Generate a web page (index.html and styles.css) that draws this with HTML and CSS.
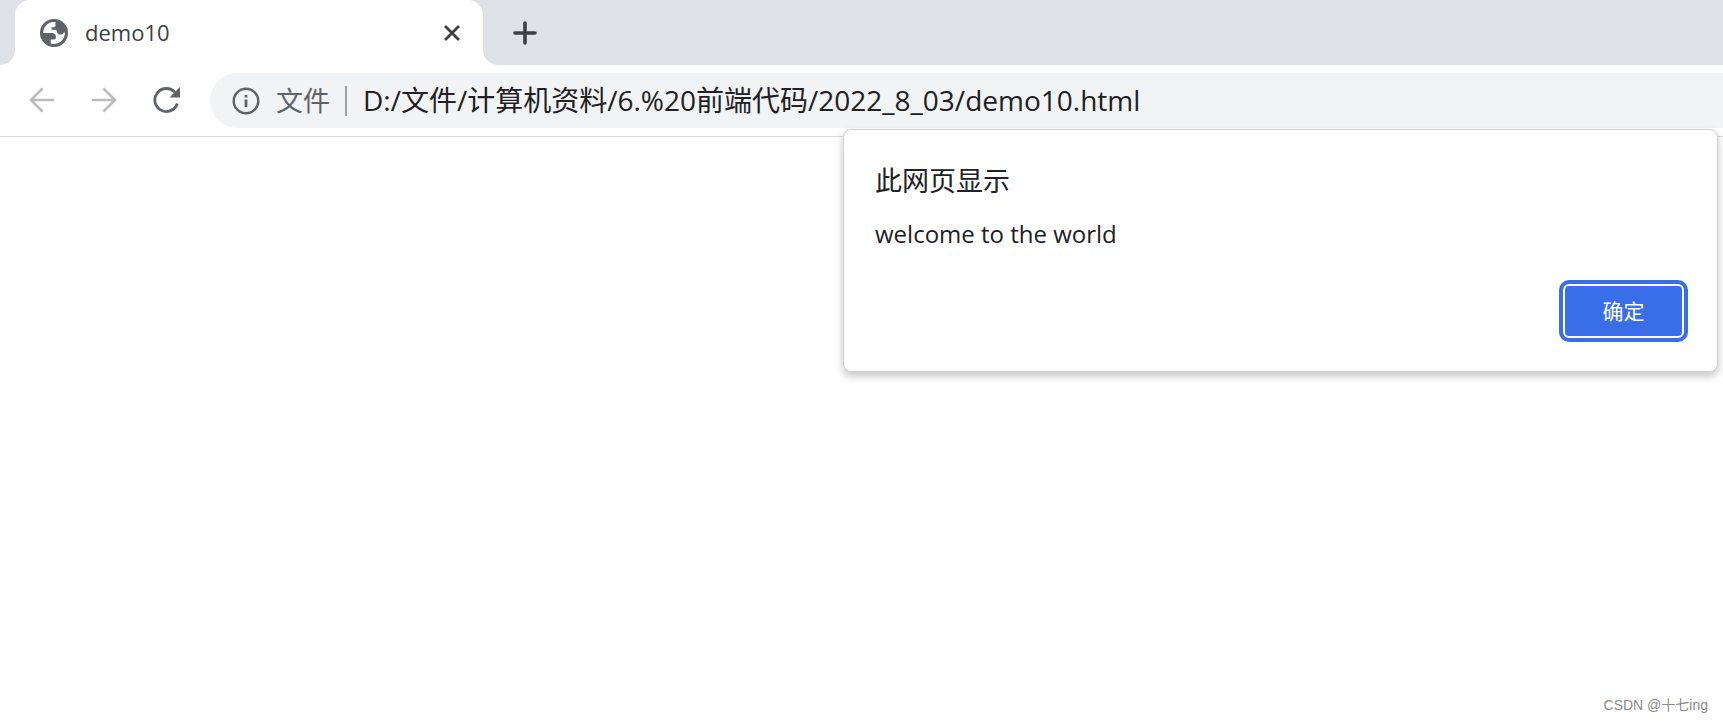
FILE: index.html
```html
<!DOCTYPE html>
<html lang="zh-CN">
<head>
<meta charset="utf-8">
<title>demo10</title>
<link rel="stylesheet" href="styles.css">
</head>
<body>
<header class="browser">
  <div class="tab-strip">
    <div class="strip-start"></div>
    <div class="tab">
      <svg class="globe" viewBox="0 0 28 28" aria-hidden="true">
        <circle cx="14" cy="14" r="14" fill="#5f6368"/>
        <path fill="#fff" d="M16 3.200C14.900 4 15.500 5.200 15.500 6.200C15.500 7.700 14.600 8.200 13.200 8.200H11.500V10.800H15.800C16.800 10.800 16.500 12.300 17 13.200C17.600 14.800 18.700 15.600 20.400 15.600C22.200 15.600 23.300 14.800 23.800 13.400H24.900A10.900 10.900 0 0 1 10.700 24.400V20.500H13.700C15.100 20.500 15.900 19.700 15.900 18.400V17.700C15.900 15.500 14.300 13.900 11.800 13.900H3.200A10.800 10.800 0 0 1 16 3.200Z"/>
      </svg>
      <span class="tab-title">demo10</span>
      <button class="tab-close" aria-label="关闭">
        <svg viewBox="0 0 18 18" width="18" height="18"><path d="M2 2 16 16M16 2 2 16" stroke="#3c4043" stroke-width="2.800"/></svg>
      </button>
    </div>
    <div class="strip-rest">
      <button class="new-tab" aria-label="新标签页">
        <svg viewBox="0 0 24 24" width="24" height="24"><path d="M12 2V22M2 12H22" stroke="#3c4043" stroke-width="3.600" stroke-linecap="round"/></svg>
      </button>
    </div>
  </div>
  <div class="toolbar">
    <button class="nav" aria-label="后退"><svg viewBox="0 0 26 26" width="26" height="26"><path d="M25 13H2M13.500 1.500 2 13 13.500 24.500" stroke="#babcbe" stroke-width="2.600" fill="none"/></svg></button>
    <button class="nav" aria-label="前进"><svg viewBox="0 0 26 26" width="26" height="26"><path d="M1 13H24M12.500 1.500 24 13 12.500 24.500" stroke="#babcbe" stroke-width="2.600" fill="none"/></svg></button>
    <button class="nav" aria-label="重新加载"><svg viewBox="0 0 28 28" width="28" height="28"><path d="M25.300 17.500A11.500 11.500 0 1 1 23 6.400" stroke="#5f6368" stroke-width="2.800" fill="none"/><path d="M28 1V11.500H17.500Z" fill="#5f6368"/></svg></button>
    <div class="omnibox">
      <svg viewBox="0 0 28 28" width="28" height="28" aria-hidden="true"><circle cx="14" cy="14" r="12.300" fill="none" stroke="#5f6368" stroke-width="2.400"/><path d="M14 8V10.500M14 12.500V20" stroke="#5f6368" stroke-width="2.800"/></svg>
      <label class="scheme" for="url">文件</label>
      <input class="url" id="url" type="text" value="D:/文件/计算机资料/6.%20前端代码/2022_8_03/demo10.html">
    </div>
  </div>
</header>
<main class="page">
  <section class="dialog" role="alertdialog" aria-labelledby="dialog-title" aria-describedby="dialog-text">
    <h1 class="dialog-title" id="dialog-title">此网页显示</h1>
    <p class="dialog-text" id="dialog-text">welcome to the world</p>
    <button class="confirm">确定</button>
  </section>
</main>
<footer class="credit">CSDN @十七ing</footer>
</body>
</html>
```
FILE: styles.css
```css
* {
  box-sizing: border-box;
}

body {
  display: flex;
  flex-direction: column;
  min-height: 100vh;
  margin: 0;
  overflow-x: hidden;
  background: #fff;
  color: #202124;
  font-family: "Open Sans", "Noto Sans CJK SC", sans-serif;
}

button {
  display: flex;
  align-items: center;
  justify-content: center;
  padding: 0;
  border: 0;
  background: none;
  font-family: inherit;
}

.tab-strip {
  display: flex;
  height: 65px;
  background: linear-gradient(#dee1e6 50%, #fff 50%);
}

.strip-start {
  flex-shrink: 0;
  width: 15px;
  border-radius: 0 0 15px 0;
  background: #dee1e6;
}

.tab {
  display: flex;
  flex-shrink: 0;
  align-items: center;
  width: 468px;
  padding: 0 22px 0 25px;
  border-radius: 15px 15px 0 0;
  background: #fff;
}

.globe {
  width: 28px;
  height: 28px;
}

.tab-title {
  flex: 1;
  margin-left: 17px;
  padding-bottom: 2px;
  color: #3c4043;
  font-size: 22px;
}

.strip-rest {
  display: flex;
  flex: 1;
  align-items: center;
  padding-left: 30px;
  border-radius: 0 0 0 15px;
  background: #dee1e6;
}

.toolbar {
  display: flex;
  align-items: center;
  height: 72px;
  padding-left: 28px;
  border-bottom: 1px solid #dadce0;
}

.nav {
  width: 28px;
  margin-right: 34px;
  padding-bottom: 2px;
}

.omnibox {
  display: flex;
  flex: 1;
  align-items: center;
  height: 55px;
  margin-left: -4px;
  padding-left: 22px;
  border-radius: 28px 0 0 28px;
  background: #f1f3f4;
  font-size: 28px;
}

.scheme {
  margin-left: 16px;
  padding-right: 15px;
  border-right: 2px solid #9aa0a6;
  color: #5f6368;
  font-size: 27px;
  line-height: 30px;
}

.url {
  flex: 1;
  min-width: 0;
  padding: 0 0 4px 16px;
  border: 0;
  outline: 0;
  background: none;
  color: inherit;
  font: inherit;
}

.page {
  position: relative;
  flex: 1;
}

.dialog {
  position: absolute;
  top: -8px;
  right: 5px;
  display: flex;
  flex-direction: column;
  width: 875px;
  padding: 33px 33px 33px 31px;
  border: 1px solid #d0d2d3;
  border-radius: 8px;
  background: #fff;
  box-shadow: 0 4px 8px rgba(0, 0, 0, 0.24);
}

.dialog-title {
  margin: 0;
  font-size: 27px;
  font-weight: 400;
  line-height: 36px;
}

.dialog-text {
  margin: 17px 0 32px;
  font-size: 24px;
  line-height: 36px;
}

.confirm {
  align-self: flex-end;
  width: 121px;
  height: 54px;
  padding-bottom: 2px;
  border: 2px solid #fff;
  border-radius: 6px;
  background: #3a6ee8;
  box-shadow: 0 0 0 4px #3a6ee8;
  color: #fff;
  font-size: 21px;
}

.credit {
  padding: 0 15px 7px;
  color: #8a8a8a;
  font-family: "Liberation Sans", "Noto Sans CJK SC", sans-serif;
  font-size: 14px;
  line-height: 20px;
  text-align: right;
}
```
